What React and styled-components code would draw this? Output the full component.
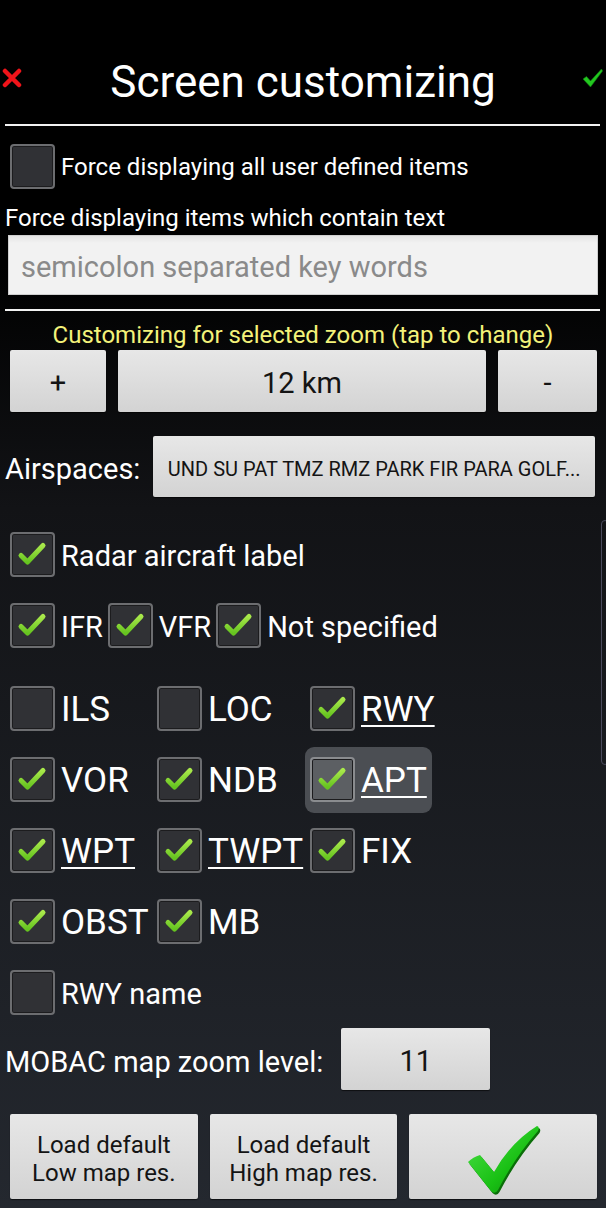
import React from "react";
import styled, { createGlobalStyle } from "styled-components";

const GlobalStyle = createGlobalStyle`
  html, body {
    margin: 0;
    padding: 0;
    background: #000;
  }
  body {
    font-family: Roboto, "Liberation Sans", sans-serif;
    color: #fff;
  }
`;

const Page = styled.div`
  position: relative;
  width: 606px;
  height: 1208px;
  overflow: hidden;
  background: linear-gradient(#000 0%, #000 22%, #121316 42%, #24282f 100%);
  display: flex;
  flex-direction: column;
`;

const StatusBar = styled.div`
  height: 40px;
  flex-shrink: 0;
`;

const Header = styled.div`
  display: grid;
  grid-template-columns: 30px 1fr 30px;
  align-items: center;
  height: 80px;
`;

const Title = styled.h1`
  margin: 0;
  padding-top: 3px;
  text-align: center;
  font-size: 44px;
  font-weight: 400;
  line-height: 1;
`;

const CornerIcon = styled.div`
  display: flex;
  justify-content: ${(p) => (p.$right ? "flex-end" : "flex-start")};
  padding: 0 2px;
  margin-top: -4px;
`;

const Divider = styled.div`
  height: 2px;
  background: #f2f2f2;
  margin: ${(p) => p.$margin || "4px 6px 0 5px"};
`;

const CheckRow = styled.div`
  display: flex;
  align-items: center;
  gap: 5px;
  height: ${(p) => p.$height || 71}px;
  padding-left: 10px;
  margin-top: ${(p) => p.$top || 0}px;
`;

const Item = styled.div`
  display: inline-flex;
  align-items: center;
  gap: 6px;
  height: 66px;
  padding: ${(p) => (p.$flat ? "0" : "0 5px")};
  border-radius: 9px;
  background: ${(p) => (p.$active ? "#4b4e53" : "transparent")};
`;

const Box = styled.div`
  width: 45px;
  height: 45px;
  box-sizing: border-box;
  flex-shrink: 0;
  border: 2px solid ${(p) => (p.$active ? "#8a8c8f" : "#6c6d70")};
  border-radius: 4px;
  background: ${(p) => (p.$active ? "#5c5f63" : "#303135")};
  box-shadow: inset 0 0 0 1px #1c1c1e;
  display: flex;
  align-items: center;
  justify-content: center;
`;

const Label = styled.span`
  font-size: ${(p) => p.$size || 29}px;
  line-height: 1.15;
  padding-top: 4px;
  color: #fff;
  white-space: nowrap;
  text-decoration: ${(p) => (p.$link ? "underline" : "none")};
  text-decoration-thickness: 2px;
  text-underline-offset: 4px;
`;

const Caption = styled.div`
  font-size: 24px;
  padding: 3px 0 0 5px;
  margin-top: 3px;
  height: 26px;
  line-height: 26px;
  white-space: nowrap;
`;

const TextInput = styled.div`
  margin: 4px 8px 0 8px;
  height: 60px;
  box-sizing: border-box;
  background: linear-gradient(#e4e4e4, #f2f2f2 12%, #f2f2f2);
  border: 1px solid #cfcfcf;
  display: flex;
  align-items: center;
  padding: 4px 0 0 12px;
  font-size: 29px;
  color: #8a8a8a;
  white-space: nowrap;
`;

const ZoomHint = styled.div`
  text-align: center;
  color: #f3f27a;
  font-size: 24px;
  margin-top: 9px;
  height: 26px;
  line-height: 30px;
  white-space: nowrap;
`;

const ButtonRow = styled.div`
  display: flex;
  gap: ${(p) => p.$gap || 12}px;
  padding: 0 9px 0 10px;
  margin-top: ${(p) => p.$top || 0}px;
  align-items: center;
`;

const Button = styled.div`
  height: ${(p) => p.$height || 62}px;
  width: ${(p) => (p.$width ? `${p.$width}px` : "auto")};
  flex: ${(p) => (p.$grow ? 1 : "none")};
  box-sizing: border-box;
  padding-top: 6px;
  background: linear-gradient(#e7e7e7, #d3d3d3);
  border-radius: 2px;
  box-shadow: 0 1px 1px rgba(0, 0, 0, 0.6);
  color: #141414;
  font-size: ${(p) => p.$size || 29}px;
  line-height: 1.15;
  display: flex;
  align-items: center;
  justify-content: center;
  text-align: center;
  white-space: nowrap;
  overflow: hidden;
`;

const LabeledRow = styled.div`
  display: flex;
  align-items: center;
  gap: ${(p) => p.$gap || 13}px;
  padding: 0 11px 0 5px;
  margin-top: ${(p) => p.$top || 0}px;
`;

const RowLabel = styled.span`
  font-size: 29px;
  padding-top: 5px;
  white-space: nowrap;
`;

const Grid = styled.div`
  display: grid;
  grid-template-columns: 147px 153px auto;
  grid-auto-rows: 71px;
  align-items: center;
  justify-items: start;
  padding-left: 5px;
  margin-top: 12px;
`;

const Scrollbar = styled.div`
  position: absolute;
  right: -3px;
  top: 520px;
  width: 8px;
  height: 245px;
  border: 1px solid #4a4a5c;
  border-radius: 5px;
  box-sizing: border-box;
`;

const Tick = () => (
  <svg width="41" height="41" viewBox="0 0 41 41">
    <defs>
      <linearGradient id="tk" x1="0" y1="0" x2="0" y2="1">
        <stop offset="0" stopColor="#a8e84a" />
        <stop offset="1" stopColor="#66c420" />
      </linearGradient>
    </defs>
    <path
      d="M9 21.5 L15.5 28 L31 11.5"
      fill="none"
      stroke="url(#tk)"
      strokeWidth="5"
      strokeLinecap="round"
      strokeLinejoin="round"
    />
  </svg>
);

const CheckBox = ({ checked, active }) => (
  <Box $active={active}>{checked && <Tick />}</Box>
);

const Check = ({ label, checked, active, link, size, flat }) => (
  <Item $active={active} $flat={flat}>
    <CheckBox checked={checked} active={active} />
    <Label $link={link} $size={size}>
      {label}
    </Label>
  </Item>
);

const CloseIcon = () => (
  <svg width="20" height="20" viewBox="0 0 20 20">
    <path
      d="M3 3 L17 17 M17 3 L3 17"
      stroke="#f0141a"
      strokeWidth="4.5"
      strokeLinecap="round"
    />
  </svg>
);

const OkIcon = () => (
  <svg width="23" height="22" viewBox="0 0 22 22">
    <path
      d="M1.5 12 L5 9.5 L9 14 L20 2 L21 4 L9 20 Z"
      fill="#22c71f"
      stroke="#117a10"
      strokeWidth="0.6"
    />
  </svg>
);

const BigCheck = () => (
  <svg width="76" height="72" viewBox="0 0 76 72">
    <defs>
      <linearGradient id="bc" x1="0" y1="0" x2="1" y2="1">
        <stop offset="0" stopColor="#4fe24a" />
        <stop offset="0.6" stopColor="#19c014" />
        <stop offset="1" stopColor="#0a8a08" />
      </linearGradient>
    </defs>
    <path
      d="M3 38 Q8 33 15 31 L29 48 Q46 18 72 2 Q75 3 73 7 Q50 33 33 66 Q30 71 26 67 Z"
      fill="#0b6e09"
      transform="translate(1.5 2)"
    />
    <path
      d="M3 38 Q8 33 15 31 L29 48 Q46 18 72 2 Q75 3 73 7 Q50 33 33 66 Q30 71 26 67 Z"
      fill="url(#bc)"
    />
  </svg>
);

const grid = [
  [
    { label: "ILS" },
    { label: "LOC" },
    { label: "RWY", checked: true, link: true },
  ],
  [
    { label: "VOR", checked: true },
    { label: "NDB", checked: true },
    { label: "APT", checked: true, link: true, active: true },
  ],
  [
    { label: "WPT", checked: true, link: true },
    { label: "TWPT", checked: true, link: true },
    { label: "FIX", checked: true },
  ],
  [{ label: "OBST", checked: true }, { label: "MB", checked: true }, null],
];

export default function App() {
  return (
    <Page>
      <GlobalStyle />
      <StatusBar />
      <Header>
        <CornerIcon>
          <CloseIcon />
        </CornerIcon>
        <Title>Screen customizing</Title>
        <CornerIcon $right>
          <OkIcon />
        </CornerIcon>
      </Header>
      <Divider />

      <CheckRow $height={66} $top={7}>
        <Check label="Force displaying all user defined items" size={24} flat />
      </CheckRow>
      <Caption>Force displaying items which contain text</Caption>
      <TextInput>semicolon separated key words</TextInput>
      <Divider $margin="14px 6px 0 5px" />
      <ZoomHint>Customizing for selected zoom (tap to change)</ZoomHint>

      <ButtonRow $top={4}>
        <Button $width={96}>+</Button>
        <Button $grow>12 km</Button>
        <Button $width={99}>-</Button>
      </ButtonRow>

      <LabeledRow $top={24}>
        <RowLabel>Airspaces:</RowLabel>
        <Button $grow $height={61} $size={20}>
          UND SU PAT TMZ RMZ PARK FIR PARA GOLF...
        </Button>
      </LabeledRow>

      <CheckRow $top={22}>
        <Check label="Radar aircraft label" checked flat />
      </CheckRow>
      <CheckRow>
        <Check label="IFR" checked flat />
        <Check label="VFR" checked flat />
        <Check label="Not specified" checked flat />
      </CheckRow>

      <Grid>
        {grid.flat().map((c, i) =>
          c ? (
            <Check
              key={i}
              label={c.label}
              checked={c.checked}
              link={c.link}
              active={c.active}
              size={35}
            />
          ) : (
            <span key={i} />
          )
        )}
      </Grid>

      <CheckRow>
        <Check label="RWY name" flat />
      </CheckRow>

      <LabeledRow $gap={18}>
        <RowLabel>MOBAC map zoom level:</RowLabel>
        <Button $width={149}>11</Button>
      </LabeledRow>

      <ButtonRow $top={24} $gap={12}>
        <Button $grow $height={85} $size={24}>
          Load default
          <br />
          Low map res.
        </Button>
        <Button $grow $height={85} $size={24}>
          Load default
          <br />
          High map res.
        </Button>
        <Button $grow $height={85}>
          <BigCheck />
        </Button>
      </ButtonRow>

      <Scrollbar />
    </Page>
  );
}
